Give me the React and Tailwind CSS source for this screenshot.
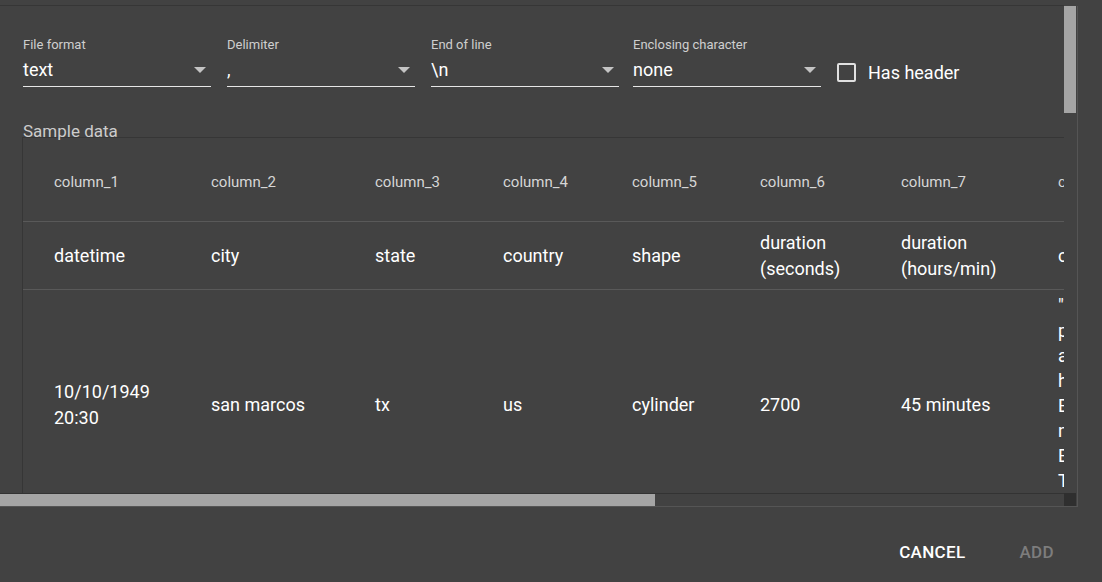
const fields = [
  { label: 'File format', value: 'text' },
  { label: 'Delimiter', value: ',' },
  { label: 'End of line', value: '\\n' },
  { label: 'Enclosing character', value: 'none', shift: true },
];

const widths = ['w-[157px]', 'w-[164px]', 'w-[128px]', 'w-[129px]', 'w-[128px]', 'w-[141px]', 'w-[157px]', 'w-[260px]'];

const headers = ['column_1', 'column_2', 'column_3', 'column_4', 'column_5', 'column_6', 'column_7', 'column_8'];
const names = ['datetime', 'city', 'state', 'country', 'shape', 'duration (seconds)', 'duration (hours/min)', 'comments'];
const row = ['10/10/1949 20:30', 'san marcos', 'tx', 'us', 'cylinder', '2700', '45 minutes'];
const comment = [
  '"This event took',
  'place in early fall',
  'around 1949-50. It',
  'happened after a',
  'Boy Scout meeting',
  'near the Baptist',
  'Baptist Church. The',
  'The church sits on',
  'the hill above',
];

function Field({ label, value, shift }) {
  return (
    <div className={shift ? 'w-[188px] ml-[-2px] flex flex-col' : 'w-[188px] flex flex-col'}>
      <div className="text-[13px] leading-[16px] text-[#cfcfcf]">{label}</div>
      <div className="mt-[4px] h-[30px] pb-[4px] flex items-center justify-between border-b border-[#e6e6e6]">
        <span className="text-[18px] text-white">{value}</span>
        <span className="mr-[5px] w-0 h-0 border-l-[6px] border-r-[6px] border-t-[6px] border-l-transparent border-r-transparent border-t-[#c4c4c4]" />
      </div>
    </div>
  );
}

export default function App() {
  return (
    <div className="w-[1102px] h-[582px] bg-[#424242] overflow-hidden flex flex-col" style={{ fontFamily: 'Roboto, "Liberation Sans", sans-serif' }}>
      <div className="h-[6px] w-[1064px] border-b border-[#363636] shrink-0" />
      <div className="flex h-[501px] w-[1078px] border-r border-b border-[#555555] shrink-0">
        <div className="flex flex-col w-[1064px]">
          <div className="h-[488px] overflow-hidden border-b border-[#333333]">
            <div className="flex items-start h-[81px] pl-[23px] pt-[31px]">
              <div className="flex gap-4">
                {fields.map(f => <Field key={f.label} {...f} />)}
              </div>
              <div className="flex items-center ml-[16px] mt-[22px]">
                <div className="w-[19px] h-[19px] border-2 border-[#e0e0e0] rounded-[2px]" />
                <span className="ml-[12px] text-[18px] text-white">Has header</span>
              </div>
            </div>
            <div className="pl-[23px] mt-[36px] text-[17px] leading-[16px] text-[#cccccc]">Sample data</div>
            <div className="ml-[22px] mt-[-2px] w-[1042px] border-t border-l border-[#363636] overflow-hidden">
              <div className="flex h-[84px] items-center pt-[6px] pl-[31px] border-b border-[#595959] w-max">
                {headers.map((h, i) => (
                  <div key={h} className={`${widths[i]} shrink-0 text-[15px] text-[#d6d6d6]`}>{h}</div>
                ))}
              </div>
              <div className="flex h-[68px] items-center pl-[31px] border-b border-[#595959] w-max">
                {names.map((n, i) => (
                  <div key={n} className={`${widths[i]} shrink-0 pr-[24px] text-[18px] leading-[26px] text-white`}>{n}</div>
                ))}
              </div>
              <div className="flex h-[230px] items-center pl-[31px] w-max">
                {row.map((v, i) => (
                  <div key={i} className={`${widths[i]} shrink-0 pr-[40px] text-[18px] leading-[26px] text-white`}>{v}</div>
                ))}
                <div className="w-[260px] shrink-0 text-[18px] leading-[25px] text-white">
                  {comment.map(c => <div key={c} className="whitespace-nowrap">{c}</div>)}
                </div>
              </div>
            </div>
          </div>
          <div className="h-[12px] flex">
            <div className="w-[655px] bg-[#a5a5a5]" />
          </div>
        </div>
        <div className="w-[13px] flex flex-col">
          <div className="w-[12px] h-[107px] bg-[#a5a5a5]" />
          <div className="flex-1" />
          <div className="w-[12px] h-[13px] bg-[#2f2f2f]" />
        </div>
      </div>
      <div className="flex-1 flex items-center justify-end pt-[17px] pr-[48px] gap-[54px]">
        <span className="text-[17px] font-medium tracking-[0.02em] text-white">CANCEL</span>
        <span className="text-[17px] font-medium tracking-[0.02em] text-[#7d7d7d]">ADD</span>
      </div>
    </div>
  );
}
